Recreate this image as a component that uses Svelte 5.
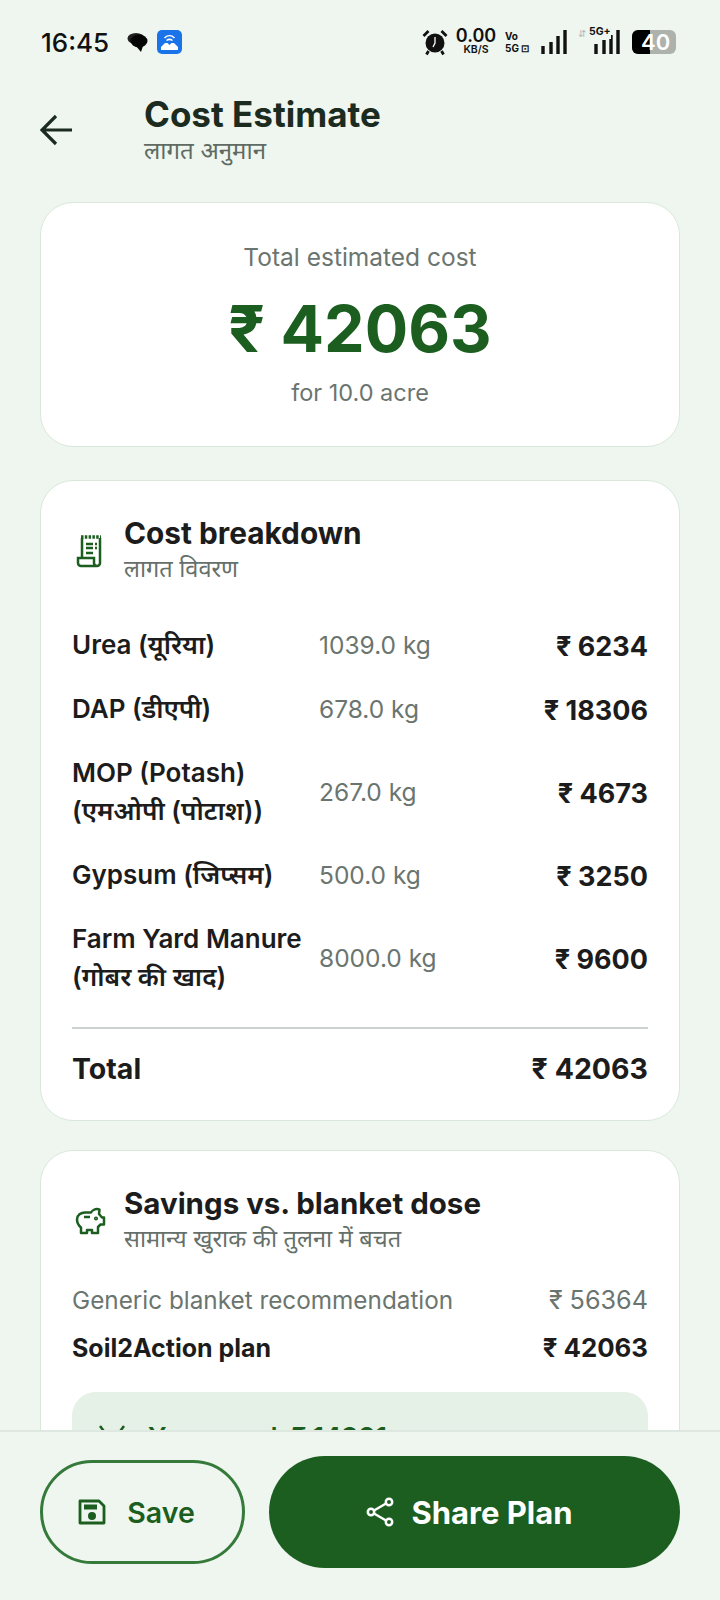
<script>
  const rows = [
    { name: ['Urea (यूरिया)'], qty: '1039.0 kg', cost: '₹ 6234' },
    { name: ['DAP (डीएपी)'], qty: '678.0 kg', cost: '₹ 18306' },
    { name: ['MOP (Potash)', '(एमओपी (पोटाश))'], qty: '267.0 kg', cost: '₹ 4673' },
    { name: ['Gypsum (जिप्सम)'], qty: '500.0 kg', cost: '₹ 3250' },
    { name: ['Farm Yard Manure', '(गोबर की खाद)'], qty: '8000.0 kg', cost: '₹ 9600' }
  ];
</script>

<div class="page">
  <div class="scroll">
    <div class="statusbar">
      <div class="status-left">
        <span class="clock">16:45</span>
        <svg class="chat" width="21" height="20" viewBox="0 0 21 20">
          <ellipse cx="9" cy="6.500" rx="8.500" ry="5.500" fill="#222" />
          <ellipse cx="12" cy="9" rx="8.500" ry="6.500" fill="#050505" />
          <path d="M9 14l5 6 2-6z" fill="#050505" />
        </svg>
        <svg class="app" width="25" height="24" viewBox="0 0 25 24">
          <rect width="25" height="24" rx="5" fill="#1a73e8" />
          <path d="M4 17l4-4h2.500l2 2 2-2H17l4 4v3H4z" fill="#fff" />
          <path d="M7.500 8c3-3 7-3 10 0M9.500 10.500c2-1.500 4-1.500 6 0" stroke="#fff" stroke-width="1.500" fill="none" />
        </svg>
      </div>
      <div class="status-right">
        <svg width="26" height="28" viewBox="0 0 26 28">
          <circle cx="13" cy="15" r="9.500" fill="#111" />
          <path d="M1.500 8l5-5M24.500 8l-5-5" stroke="#111" stroke-width="2.800" />
          <path d="M6.500 23l-2 3.500M19.500 23l2 3.500" stroke="#111" stroke-width="2.800" />
          <path d="M13 9v6l-2 4" stroke="#fff" stroke-width="1.300" fill="none" />
        </svg>
        <div class="net"><b>0.00</b><small>KB/S</small></div>
        <div class="vo"><span>Vo</span><span>5G ⊡</span></div>
        <svg class="sig" width="26" height="24" viewBox="0 0 26 24">
          <path d="M2 16v8M10 12v12M17 6v18M24 0v24" stroke="#111" stroke-width="3.400" />
        </svg>
        <div class="fiveg">
          <span class="arrows">⇵</span>
          <span class="gen">5G+</span>
          <svg width="26" height="24" viewBox="0 0 26 24">
            <path d="M2 14v10M10 10v14M17 5v19M24 0v24" stroke="#111" stroke-width="3.400" />
          </svg>
        </div>
        <div class="battery"><span class="fill"></span><span class="level">40</span></div>
      </div>
    </div>

    <header class="topbar">
      <svg class="back" width="33" height="32" viewBox="0 0 33 32">
        <path d="M32 16H3M16 2L2 16l14 14" stroke="#1c2b20" stroke-width="3.200" fill="none" />
      </svg>
      <div>
        <h1>Cost Estimate</h1>
        <p>लागत अनुमान</p>
      </div>
    </header>

    <main class="content">
      <section class="card hero">
        <div class="hero-label">Total estimated cost</div>
        <div class="hero-value">₹ 42063</div>
        <div class="hero-sub">for 10.0 acre</div>
      </section>

      <section class="card breakdown">
        <div class="card-head">
          <svg width="36" height="36" viewBox="0 0 36 36" fill="none" stroke="#1b5e20" stroke-width="2.500">
            <path d="M10 25V5M28 5v25a3 3 0 0 1-3 3H9a3 3 0 0 1-3-3v-5h16v5a3 3 0 0 0 3 3" />
            <path d="M9 4h20" stroke-width="3.500" stroke-dasharray="2.500 1.300" />
            <path d="M14 11h7M23 11h2M14 15h7M23 15h2M14 20h7" stroke-width="2.400" />
          </svg>
          <div>
            <h2>Cost breakdown</h2>
            <p>लागत विवरण</p>
          </div>
        </div>
        <div class="rows">
          {#each rows as r}
            <div class="row">
              <div class="name">
                {#each r.name as line}<div>{line}</div>{/each}
              </div>
              <div class="qty">{r.qty}</div>
              <div class="cost">{r.cost}</div>
            </div>
          {/each}
        </div>
        <div class="total">
          <span>Total</span>
          <span>₹ 42063</span>
        </div>
      </section>

      <section class="card savings">
        <div class="card-head">
          <svg width="36" height="36" viewBox="0 0 36 36" fill="none" stroke="#1b5e20" stroke-width="2.500" stroke-linejoin="round">
            <path d="M25 6c1.500 0 2.500.5 2.500.5l-.5 4.500 3 3.500H32v7h-3.500L26 24v6h-6v-3h-5v3H9v-5.500C6 22 5 19 5 16.500 5 12 9 9.500 13 9.500h6c1-2 4-3.500 6-3.500z" />
            <path d="M12 14h6" />
            <circle cx="24" cy="15.500" r="0.800" />
          </svg>
          <div>
            <h2>Savings vs. blanket dose</h2>
            <p>सामान्य खुराक की तुलना में बचत</p>
          </div>
        </div>
        <div class="compare muted">
          <span>Generic blanket recommendation</span>
          <span class="amt">₹ 56364</span>
        </div>
        <div class="compare strong">
          <span>Soil2Action plan</span>
          <span class="amt">₹ 42063</span>
        </div>
        <div class="saved">
          <svg width="28" height="28" viewBox="0 0 28 28" fill="none" stroke="#1b5e20" stroke-width="2.500">
            <path d="M2 2l6 8M26 2l-6 8M8 10h12l-6 14z" />
          </svg>
          <span>You saved</span>
          <b>₹ 14301</b>
        </div>
      </section>
    </main>
  </div>

  <footer class="actions">
    <button class="btn save">
      <svg width="28" height="26" viewBox="0 0 28 26" fill="none">
        <path d="M2 2h19l5 5v17H2z" stroke="#1b5e20" stroke-width="2.800" stroke-linejoin="round" />
        <rect x="6" y="5.500" width="13" height="5" fill="#1b5e20" />
        <circle cx="14" cy="17" r="4" fill="#1b5e20" />
      </svg>
      Save
    </button>
    <button class="btn share">
      <svg width="28" height="30" viewBox="0 0 28 30" fill="none" stroke="#fff" stroke-width="2.500">
        <circle cx="23" cy="5" r="3.200" />
        <circle cx="5" cy="15" r="3.200" />
        <circle cx="23" cy="25" r="3.200" />
        <path d="M8 13.500L20 6.500M8 16.500l12 7" />
      </svg>
      Share Plan
    </button>
  </footer>
</div>

<style>
  :global(body) {
    margin: 0;
    background: #eef6ef;
  }

  .page {
    width: 720px;
    height: 1600px;
    display: flex;
    flex-direction: column;
    overflow: hidden;
    background: #eef6ef;
    font-family: Inter, "Noto Sans", "Noto Sans Devanagari", sans-serif;
    color: #1c1c1c;
  }

  .scroll {
    flex: 1;
    min-height: 0;
    overflow: hidden;
  }

  .statusbar {
    height: 84px;
    box-sizing: border-box;
    padding: 0 44px 0 41px;
    display: flex;
    align-items: center;
    justify-content: space-between;
    color: #111;
  }

  .status-left,
  .status-right {
    display: flex;
    align-items: center;
  }

  .clock {
    font-size: 26px;
    font-weight: 500;
  }

  .chat { margin-left: 18px; }
  .app { margin-left: 9px; }

  .net {
    display: flex;
    flex-direction: column;
    align-items: center;
    gap: 2px;
    width: 38px;
    margin-left: 9px;
  }

  .net b {
    font-size: 18px;
    font-weight: 600;
    line-height: 14px;
  }

  .net small {
    font-size: 10.500px;
    font-weight: 600;
    line-height: 10px;
  }

  .vo {
    display: flex;
    flex-direction: column;
    font-size: 10px;
    font-weight: 700;
    line-height: 12px;
    width: 23px;
    margin-left: 10px;
    white-space: nowrap;
  }

  .sig { margin-left: 13px; }

  .fiveg {
    position: relative;
    width: 40px;
    margin-left: 13px;
    display: flex;
    justify-content: flex-end;
  }

  .fiveg .gen {
    position: absolute;
    left: 9px;
    top: -5px;
    font-size: 10.500px;
    line-height: 14px;
    font-weight: 700;
    background: #eef6ef;
  }

  .fiveg .arrows {
    position: absolute;
    left: -2px;
    top: -4px;
    font-size: 10px;
    line-height: 14px;
    color: #b5bab6;
  }

  .battery {
    position: relative;
    width: 44px;
    height: 24px;
    margin-left: 12px;
    border-radius: 6px;
    background: #adb2ad;
    overflow: hidden;
  }

  .battery .fill {
    position: absolute;
    left: 0;
    top: 0;
    bottom: 0;
    width: 18px;
    background: #000;
  }

  .battery .level {
    position: absolute;
    left: 9px;
    color: #fff;
    font-size: 22px;
    font-weight: 600;
    line-height: 24px;
  }

  .topbar {
    display: flex;
    align-items: flex-start;
    gap: 72px;
    padding: 10px 40px 0 40px;
    height: 106px;
    box-sizing: border-box;
  }

  .back { margin-top: 20px; }

  .topbar > div { margin-left: -1px; }

  h1 {
    margin: 0;
    font-size: 35px;
    line-height: 40px;
    font-weight: 700;
    color: #1c2b20;
  }

  .topbar p {
    margin: 0;
    padding-top: 2px;
    font-size: 24px;
    line-height: 30px;
    color: #5f6b62;
  }

  .content {
    display: flex;
    flex-direction: column;
    gap: 33px;
    padding: 12px 40px 0;
  }

  .card {
    background: #fff;
    border: 1.500px solid #d9e8da;
    border-radius: 33px;
    box-sizing: border-box;
  }

  .hero {
    height: 245px;
    display: flex;
    flex-direction: column;
    align-items: center;
    padding-top: 39px;
  }

  .hero-label {
    font-size: 24.500px;
    line-height: 30px;
    color: #6b7570;
  }

  .hero-value {
    font-size: 64.500px;
    line-height: 72px;
    margin-top: 21px;
    font-weight: 700;
    color: #1b5e20;
  }

  .hero-sub {
    font-size: 23.500px;
    line-height: 30px;
    margin-top: 13px;
    color: #6b7570;
  }

  .breakdown {
    height: 641px;
    padding: 33px 31px 0;
  }

  .savings {
    margin-top: -4px;
    padding: 33px 31px 40px;
  }

  .card-head {
    display: flex;
    align-items: center;
    gap: 16px;
  }

  .card-head svg { flex: none; margin-top: 4px; }

  h2 {
    margin: 0;
    font-size: 29.800px;
    line-height: 38px;
    font-weight: 700;
    color: #1c1c1c;
  }

  .savings h2 { font-size: 29.500px; }

  .card-head p {
    margin: 3px 0 0;
    font-size: 23.500px;
    line-height: 28px;
    color: #66706a;
  }

  .rows {
    display: flex;
    flex-direction: column;
    gap: 26px;
    margin-top: 43px;
  }

  .row {
    display: grid;
    grid-template-columns: 247px 1fr auto;
    align-items: center;
  }

  .name {
    font-size: 26px;
    line-height: 38px;
    font-weight: 600;
    white-space: nowrap;
  }

  .qty {
    font-size: 24.500px;
    color: #6b7570;
  }

  .cost {
    font-size: 27px;
    font-weight: 700;
    position: relative;
    top: 1px;
  }

  .total {
    margin-top: 31px;
    border-top: 2px solid #ccd2cd;
    padding-top: 20px;
    display: flex;
    justify-content: space-between;
    font-size: 28.500px;
    line-height: 40px;
    font-weight: 700;
  }

  .compare {
    display: flex;
    justify-content: space-between;
  }

  .compare.muted {
    margin-top: 30px;
    font-size: 24.300px;
    line-height: 34px;
    color: #6b7570;
  }

  .compare.strong {
    margin-top: 14px;
    font-size: 25px;
    line-height: 34px;
    font-weight: 700;
  }

  .muted .amt { font-size: 25.200px; }
  .strong .amt { font-size: 25.800px; }

  .saved {
    margin-top: 27px;
    height: 110px;
    border-radius: 24px;
    background: #e5f0e6;
    padding: 29px 26px;
    box-sizing: border-box;
    display: flex;
    align-items: flex-start;
    font-size: 26px;
    line-height: 32px;
    font-weight: 600;
    color: #1b5e20;
  }

  .saved svg {
    margin: 3px 22px 0 0;
  }

  .saved b {
    font-weight: 700;
    margin-left: 14px;
  }

  .actions {
    flex: none;
    height: 170px;
    box-sizing: border-box;
    border-top: 2px solid #dfe8e0;
    background: #eef6ef;
    padding: 24px 40px 0;
    display: flex;
    align-items: flex-start;
    gap: 24px;
  }

  .btn {
    display: flex;
    align-items: center;
    justify-content: center;
    font-family: inherit;
    border-radius: 56px;
    cursor: pointer;
  }

  .btn.save {
    width: 205px;
    height: 104px;
    margin-top: 4px;
    padding: 0 12px 0 0;
    gap: 21px;
    font-size: 28.500px;
    font-weight: 600;
    color: #1b5e20;
    background: transparent;
    border: 3px solid #357a3a;
  }

  .btn.share {
    flex: 1;
    height: 112px;
    padding: 0 10px 0 0;
    gap: 17px;
    font-size: 31px;
    font-weight: 700;
    color: #fff;
    background: #1b5e20;
    border: none;
  }
</style>
